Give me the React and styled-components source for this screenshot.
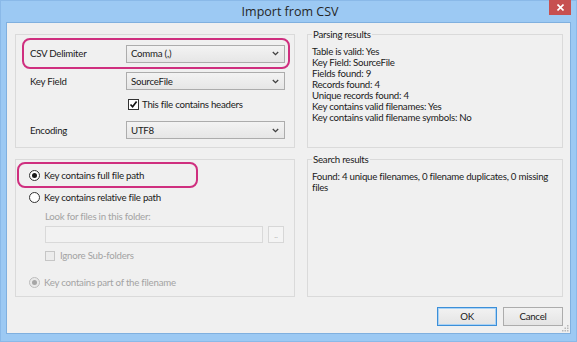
import React from 'react';
import styled, { createGlobalStyle } from 'styled-components';

const Global = createGlobalStyle`
  html, body { margin: 0; padding: 0; background: #ffffff; }
  body { font-family: Lato, "Open Sans", sans-serif; }
  * { box-sizing: border-box; }
`;

const Window = styled.div`
  width: 577px;
  height: 342px;
  background: #9cc9f3;
  border: 1px solid #8ab9e8;
  padding: 0 5px 7px 5px;
  display: flex;
  flex-direction: column;
`;

const TitleBar = styled.div`
  height: 21px;
  display: grid;
  grid-template-columns: 1fr auto 1fr;
  align-items: start;
`;

const Title = styled.div`
  grid-column: 2;
  font-family: "Open Sans", sans-serif;
  font-size: 12.5px;
  line-height: 21px;
  color: #262626;
  padding-left: 3px;
`;

const Close = styled.div`
  grid-column: 3;
  justify-self: end;
  width: 22px;
  height: 15px;
  margin-top: -1px;
  background: #c75050;
  display: flex;
  align-items: center;
  justify-content: center;
`;

const Content = styled.div`
  flex: 1;
  position: relative;
  background: #f0f0f0;
  border: 1px solid #80b0df;
  padding: 11px 7px 7px 8px;
  display: flex;
  flex-direction: column;
  font-size: 9.7px;
  letter-spacing: -0.25px;
  line-height: 11px;
  color: #1a1a1a;
`;

const Main = styled.div`
  display: grid;
  grid-template-columns: 280px 256px;
  grid-template-rows: 114px 138px;
  column-gap: 12px;
  row-gap: 11px;
`;

const Panel = styled.div`
  border: 1px solid #dadada;
  display: flex;
  flex-direction: column;
  align-items: flex-start;
  padding: ${(p) => p.$pad};
`;

const Highlight = styled.div`
  border: 2px solid #cf2f7f;
  border-radius: 8px;
  width: ${(p) => p.$w}px;
  height: ${(p) => p.$h}px;
  padding-left: ${(p) => p.$pl}px;
  display: ${(p) => (p.$grid ? 'grid' : 'flex')};
  grid-template-columns: 96px 159px;
  align-items: center;
`;

const FieldRow = styled.div`
  display: grid;
  grid-template-columns: 96px 159px;
  align-items: center;
  height: 18px;
  margin-left: 8px;
  margin-top: ${(p) => p.$mt}px;
`;

const Label = styled.span`
  color: ${(p) => (p.$disabled ? '#a3a3a3' : '#1a1a1a')};
  white-space: nowrap;
`;

const Select = styled.div`
  height: 18px;
  border: 1px solid #acacac;
  background: linear-gradient(#f3f3f3, #e6e6e6);
  padding: 0 5px 0 4px;
  display: flex;
  align-items: center;
  justify-content: space-between;
`;

const CheckRow = styled.div`
  display: flex;
  align-items: center;
  gap: ${(p) => p.$gap}px;
  height: 11px;
  margin-left: ${(p) => p.$ml}px;
  margin-top: ${(p) => p.$mt}px;
`;

const Box = styled.span`
  width: ${(p) => p.$s}px;
  height: ${(p) => p.$s}px;
  border: 1px solid ${(p) => (p.$disabled ? '#c6c6c6' : '#333333')};
  background: ${(p) => (p.$disabled ? '#ececec' : '#ffffff')};
  display: flex;
  align-items: center;
  justify-content: center;
  flex: none;
`;

const RadioRow = styled.div`
  display: flex;
  align-items: center;
  gap: 4px;
  height: 13px;
  margin-left: ${(p) => p.$ml || 0}px;
  margin-top: ${(p) => p.$mt || 0}px;
`;

const RadioCircle = styled.span`
  width: 11px;
  height: 11px;
  border-radius: 50%;
  border: 1px solid ${(p) => (p.$disabled ? '#bdbdbd' : '#333333')};
  background: ${(p) => (p.$disabled ? '#e9e9e9' : '#ffffff')};
  display: flex;
  align-items: center;
  justify-content: center;
  flex: none;
  &::after {
    content: '';
    display: ${(p) => (p.$on ? 'block' : 'none')};
    width: 5px;
    height: 5px;
    border-radius: 50%;
    background: ${(p) => (p.$disabled ? '#a6a6a6' : '#1a1a1a')};
  }
`;

const SubText = styled.div`
  margin-left: 28px;
  margin-top: 7px;
  color: #a3a3a3;
`;

const PathRow = styled.div`
  display: flex;
  gap: 5px;
  margin-left: 28px;
  margin-top: 4px;
`;

const PathInput = styled.div`
  width: 218px;
  height: 17px;
  border: 1px solid #d9d9d9;
  background: #f2f2f2;
`;

const Browse = styled.div`
  width: 16px;
  height: 17px;
  border: 1px solid #d7d7d7;
  background: #f4f4f4;
  color: #b0b0b0;
  font-size: 8px;
  line-height: 17px;
  text-align: center;
`;

const Group = styled.fieldset`
  margin: -5px 0 0 0;
  border: 1px solid #dadada;
  padding: 6px 4px 0 4px;
  min-width: 0;
`;

const Legend = styled.legend`
  padding: 0 1px;
  line-height: 11px;
  color: #1a1a1a;
`;

const Line = styled.div`
  line-height: 11px;
`;

const Footer = styled.div`
  display: flex;
  justify-content: flex-end;
  gap: 6px;
  margin-top: 10px;
`;

const Button = styled.div`
  width: 60px;
  height: 19px;
  border: 1px solid ${(p) => (p.$default ? '#3c8fd8' : '#acacac')};
  background: linear-gradient(#f2f2f2, #e4e4e4);
  box-shadow: ${(p) => (p.$default ? 'inset 0 0 0 1px #a9d2f5' : 'none')};
  display: flex;
  align-items: center;
  justify-content: center;
  color: #1a1a1a;
`;

const Grip = styled.svg`
  position: absolute;
  right: 1px;
  bottom: 1px;
`;

const Chevron = () => (
  <svg width="7" height="5" viewBox="0 0 7 5">
    <path d="M0.8 1 L3.5 3.7 L6.2 1" fill="none" stroke="#404040" strokeWidth="1.3" />
  </svg>
);

const Check = () => (
  <svg width="9" height="9" viewBox="0 0 9 9">
    <path d="M1.5 4.5 L3.6 6.8 L7.6 1.6" fill="none" stroke="#111" strokeWidth="1.7" />
  </svg>
);

export default function App() {
  return (
    <>
      <Global />
      <Window>
        <TitleBar>
          <Title>Import from CSV</Title>
          <Close>
            <svg width="7" height="7" viewBox="0 0 7 7">
              <path d="M0.5 0.5 L6.5 6.5 M6.5 0.5 L0.5 6.5" stroke="#ffffff" strokeWidth="1.6" />
            </svg>
          </Close>
        </TitleBar>
        <Content>
          <Main>
            <Panel $pad="3px 0 0 6px">
              <Highlight $grid $w={268} $h={31} $pl={6}>
                <Label>CSV Delimiter</Label>
                <Select>
                  <span>Comma (,)</span>
                  <Chevron />
                </Select>
              </Highlight>
              <FieldRow $mt={3}>
                <Label>Key Field</Label>
                <Select>
                  <span>SourceFile</span>
                  <Chevron />
                </Select>
              </FieldRow>
              <CheckRow $ml={106} $mt={9} $gap={3}>
                <Box $s={11}>
                  <Check />
                </Box>
                <Label>This file contains headers</Label>
              </CheckRow>
              <FieldRow $mt={11}>
                <Label>Encoding</Label>
                <Select>
                  <span>UTF8</span>
                  <Chevron />
                </Select>
              </FieldRow>
            </Panel>

            <Group>
              <Legend>Parsing results</Legend>
              <Line>Table is valid: Yes</Line>
              <Line>Key Field: SourceFile</Line>
              <Line>Fields found: 9</Line>
              <Line>Records found: 4</Line>
              <Line>Unique records found: 4</Line>
              <Line>Key contains valid filenames: Yes</Line>
              <Line>Key contains valid filename symbols: No</Line>
            </Group>

            <Panel $pad="2px 0 0 1px">
              <Highlight $w={181} $h={26} $pl={10}>
                <RadioRow>
                  <RadioCircle $on />
                  <Label>Key contains full file path</Label>
                </RadioRow>
              </Highlight>
              <RadioRow $ml={12} $mt={3}>
                <RadioCircle />
                <Label>Key contains relative file path</Label>
              </RadioRow>
              <SubText>Look for files in this folder:</SubText>
              <PathRow>
                <PathInput />
                <Browse>..</Browse>
              </PathRow>
              <CheckRow $ml={28} $mt={7} $gap={5}>
                <Box $s={10} $disabled />
                <Label $disabled>Ignore Sub-folders</Label>
              </CheckRow>
              <RadioRow $ml={12} $mt={15}>
                <RadioCircle $on $disabled />
                <Label $disabled>Key contains part of the filename</Label>
              </RadioRow>
            </Panel>

            <Group>
              <Legend>Search results</Legend>
              <Line>Found: 4 unique filenames, 0 filename duplicates, 0 missing files</Line>
            </Group>
          </Main>
          <Footer>
            <Button $default>OK</Button>
            <Button>Cancel</Button>
          </Footer>
          <Grip width="7" height="7" viewBox="0 0 7 7">
            <g fill="#b8b8b8">
              <rect x="5" y="0" width="1.5" height="1.5" />
              <rect x="2.5" y="2.5" width="1.5" height="1.5" />
              <rect x="5" y="2.5" width="1.5" height="1.5" />
              <rect x="0" y="5" width="1.5" height="1.5" />
              <rect x="2.5" y="5" width="1.5" height="1.5" />
              <rect x="5" y="5" width="1.5" height="1.5" />
            </g>
          </Grip>
        </Content>
      </Window>
    </>
  );
}
